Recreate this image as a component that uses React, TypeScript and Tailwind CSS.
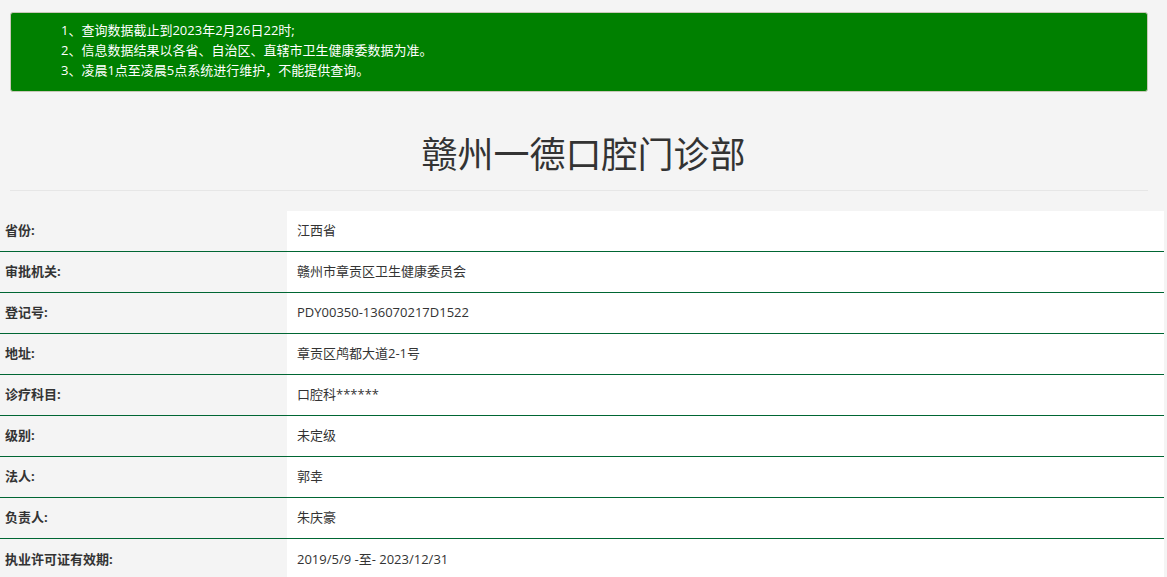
export default function App() {
  const rows: [string, string][] = [
    ["省份:", "江西省"],
    ["审批机关:", "赣州市章贡区卫生健康委员会"],
    ["登记号:", "PDY00350-136070217D1522"],
    ["地址:", "章贡区鸬都大道2-1号"],
    ["诊疗科目:", "口腔科******"],
    ["级别:", "未定级"],
    ["法人:", "郭幸"],
    ["负责人:", "朱庆豪"],
    ["执业许可证有效期:", "2019/5/9 -至- 2023/12/31"],
  ];
  return (
    <div className="min-h-screen bg-[#f4f4f4] pt-3 text-[#333]" style={{ fontFamily: '"Open Sans","Noto Sans CJK SC",sans-serif' }}>
      <div className="mx-[10px] mr-[19px] h-[80px] rounded-[3px] border border-[#c8c8b8] bg-[#008000] pl-[50px] pt-[7px] text-[13px] leading-[20px] text-white">
        <div>1、查询数据截止到2023年2月26日22时;</div>
        <div>2、信息数据结果以各省、自治区、直辖市卫生健康委数据为准。</div>
        <div>3、凌晨1点至凌晨5点系统进行维护，不能提供查询。</div>
      </div>
      <h1 className="mt-[38px] text-center text-[36px] leading-[50px] text-[#333]">赣州一德口腔门诊部</h1>
      <div className="mx-[10px] mr-[19px] mt-[10px] border-t border-[#e6e6e6]"></div>
      <div className="mt-[20px] mr-[3px]">
        {rows.map(([k, v], i) => (
          <div key={i} className={`flex h-[41px] items-center ${i < rows.length - 1 ? "border-b border-[#006633]" : ""}`}>
            <div className="flex h-full w-[287px] items-center pl-[5px] text-[13px] font-bold text-[#333]">{k}</div>
            <div className="flex h-full flex-1 items-center bg-white pl-[10px] text-[13px]">{v}</div>
          </div>
        ))}
      </div>
    </div>
  );
}
